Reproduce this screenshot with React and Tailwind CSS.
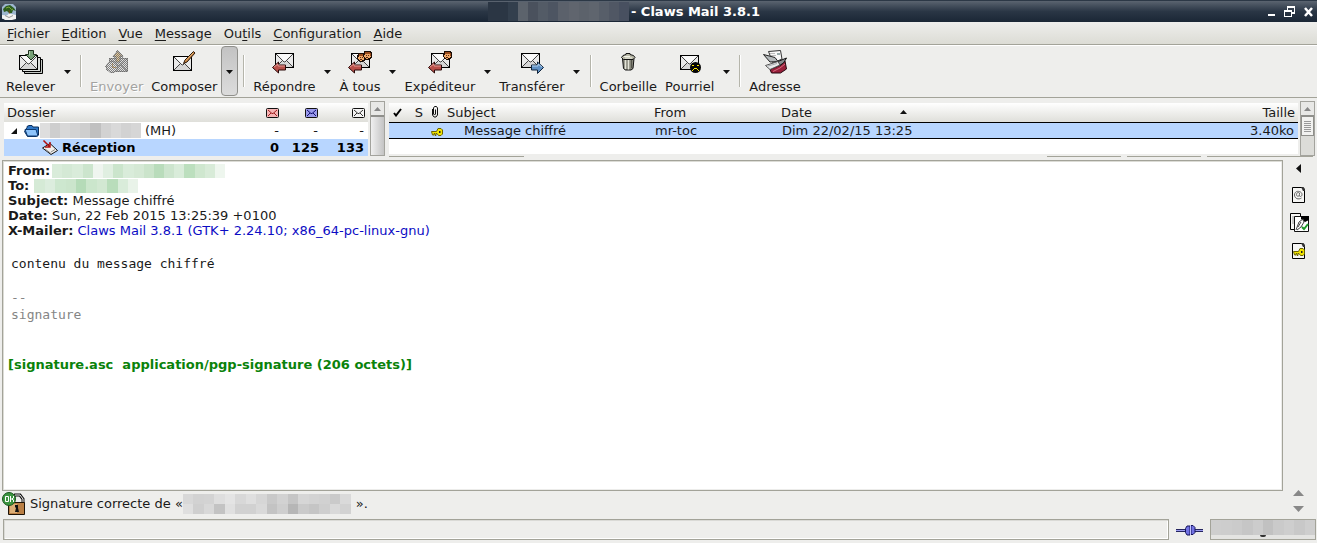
import { useState } from 'react';

const MENUS = [
  ['', 'F', 'ichier'],
  ['', 'E', 'dition'],
  ['', 'V', 'ue'],
  ['', 'M', 'essage'],
  ['Ou', 't', 'ils'],
  ['', 'C', 'onfiguration'],
  ['', 'A', 'ide'],
];

const TITLE_BLUR = ['#2b3644', '#2b3644', '#333f4d', '#5c636c', '#4a515d', '#535b66', '#4d5562', '#5b616b', '#60656e', '#5c626b', '#5f656e', '#575e69', '#505764', '#485060'];
const FOLDER_BLUR = ['#dedede', '#cecece', '#d8d8d8', '#d3d3d3', '#cecece', '#c0c0c0', '#d2d2d2', '#d9d9d9', '#d2d2d2', '#d6d6d6'];
const FROM_BLUR = ['#d9ecda', '#d4e9d5', '#d9ecda', '#cce5cd', '#eff5ef', '#e0efe1', '#cbe5cc', '#d9ecda', '#d5e9d5', '#cbe4cb', '#b9dcbb', '#cde5ce', '#d9ecda', '#bcdfbe', '#cfe7cf', '#d8ebd8', '#eef6ee'];
const TO_BLUR = ['#d5ead6', '#dcedde', '#cde7cf', '#cbe5cc', '#b5dbb8', '#cbe6cc', '#d2e8d2', '#b9ddbb', '#d9ecda', '#e9f3e9'];
const SIGNER_BLUR_TOP = ['#d8d8d8', '#d2d2d2', '#d3d3d3', '#dedede', '#e4e4e4', '#d8d8d8', '#dfdfdf', '#d6d6d6', '#c9c9c9', '#d2d2d2', '#c5c5c5', '#d6d6d6', '#d3d3d3', '#d1d1d1', '#cacaca', '#dadada'];
const SIGNER_BLUR_BOTTOM = ['#dfdfdf', '#cfcfcf', '#d8d8d8', '#c3c3c3', '#e0e0e0', '#d1d1d1', '#d1d1d1', '#d9d9d9', '#c3c3c3', '#cecece', '#b6b6b6', '#cacaca', '#c5c5c5', '#cecece', '#d9d9d9', '#d2d2d2'];
const ACCOUNT_BLUR = ['#cecece', '#cdcdcd', '#cbcbcb', '#c6c6c6', '#cccccc', '#c1c1c1', '#cacaca', '#cecece', '#c8c8c8', '#cecece'];

function Mosaic({ colors, className }) {
  return (
    <span className={`flex ${className}`} aria-hidden="true">
      {colors.map((c, i) => <span key={i} className="flex-1" style={{ backgroundColor: c }} />)}
    </span>
  );
}

/* Shared icon pieces */
function Envelope({ x = 0, y = 0 }) {
  return (
    <g transform={`translate(${x} ${y})`}>
      <rect x="0.5" y="0.5" width="18" height="14" fill="#e9e9e9" stroke="#000" />
      <path d="M1 14 7 8l2 2h1l2-2 6 6z" fill="#d6d6d6" />
      <path d="M2 1h15L9.500 8.500z" fill="#fafafa" />
      <path d="M1 1l8 8h1l8-8M1 14l6-6M18 14l-6-6" fill="none" stroke="#444" />
    </g>
  );
}

function RedArrow() {
  return (
    <>
      <path d="M.5 17.500 6.500 12v3h7v5h-7v3z" fill="#b84f49" stroke="#2a0808" />
      <path d="M2 17l4-3v2h7" fill="none" stroke="#e59a94" />
    </>
  );
}

function Head({ x, y }) {
  return (
    <g transform={`translate(${x} ${y})`} shapeRendering="crispEdges">
      <path d="M1 0h7v1h1v6H8v1H6v1H3V8H1V6H0V2h1z" fill="#1c0e08" />
      <path d="M2 3h6v3H7v1H5v1H3V7H2V6H1V4h1z" fill="#f0a868" />
      <path d="M2 1h5v1h1v3H7V3H2z" fill="#9a4c1c" />
      <path d="M3 4h1v1H3zM5 4h1v1H5zM3 6h2v1H3z" fill="#5a2a10" />
    </g>
  );
}

function Icon({ name }) {
  return (
    <svg className="block" width="24" height="24" viewBox="0 0 24 24" aria-hidden="true">
      {name === 'receive' && (
        <>
          <path d="M5.500 9.500h18v14h-18z" fill="#c4c8c4" stroke="#000" />
          <path d="M3.500 7.500h18v14h-18z" fill="#dcdfdc" stroke="#000" />
          <Envelope x={0} y={5} />
          <path d="M9.500.5h5v4h3L12 10 6.500 4.500h3z" fill="#76a076" stroke="#1d301d" />
          <path d="M10.500 1v4.500" stroke="#b3d0b3" />
        </>
      )}
      {name === 'send' && (
        <>
          <defs>
            <pattern id="stipple" width="2" height="2" patternUnits="userSpaceOnUse">
              <path d="M0 0h1v1H0zM1 1h1v1H1z" fill="#555" />
            </pattern>
          </defs>
          <g opacity="0.8">
            <path d="M4.500 8.500h18v13h-18z" fill="#dcdcdc" stroke="#888" />
            <path d="M5 9l8 7h1l8-7M5 21l6-6M22 21l-6-6" fill="none" stroke="#888" />
            <path d="M12.500 1 18 6.500h-3V12h-4V6.500H8z" fill="#e5c38a" stroke="#888" />
            <circle cx="7" cy="17" r="5.500" fill="#e6e6e6" stroke="#888" />
            <path d="M7.500 13v4.500H11" fill="none" stroke="#c79b58" />
          </g>
          <path d="M4 8h4V6l4.500-6L18 6v2h5v14H12l-5 1-6-3-1-5 4-4z" fill="url(#stipple)" opacity="0.7" shapeRendering="crispEdges" />
        </>
      )}
      {name === 'compose' && (
        <>
          <Envelope x={1} y={6} />
          <path d="M21.500 1.500 13 10l-1.500 3.500L15 12l8-9z" fill="#c58443" stroke="#2b190b" />
          <path d="M21 3l-7 7.500" stroke="#e9b274" />
        </>
      )}
      {name === 'reply' && <><Envelope x={3} y={3} /><RedArrow /></>}
      {name === 'all' && <><Envelope x={3} y={3} /><Head x={9} y={3} /><Head x={15} y={1} /><RedArrow /></>}
      {name === 'sender' && <><Envelope x={3} y={3} /><Head x={15} y={1} /><RedArrow /></>}
      {name === 'forward' && (
        <>
          <Envelope x={1} y={3} />
          <path d="M23.500 17.500 17.500 12v3h-6v5h6v3.500z" fill="#5f90c4" stroke="#10243c" />
          <path d="M12 16h6v-2l4 3" fill="none" stroke="#b4d2ee" />
        </>
      )}
      {name === 'trash' && (
        <>
          <path d="M6.500 8.500h11.500l-1 10-2 1.500H9.500l-2-1.500z" fill="#86867a" stroke="#111" />
          <path d="M9.500 10v9M12.500 10v9.500" stroke="#e4e4d8" strokeWidth="1.500" />
          <path d="M15.500 10v8" stroke="#55554c" />
          <path d="M5.500 7.500 7 5.500l3-1V3.500h4v1l3.500 1 1.500 2-2 2H7.500z" fill="#b7b7a6" stroke="#111" />
          <path d="M8 6.500h6M9 8h7" stroke="#f2f2e6" />
        </>
      )}
      {name === 'spam' && (
        <>
          <Envelope x={2} y={5} />
          <circle cx="17.500" cy="17.500" r="5.500" fill="#050505" />
          <path d="M14 15h2v1h-2zM19 15h2v1h-2zM16 18h3v1h-3zM15 19h1v1h-1zM19 19h1v1h-1zM14 20h1v1h-1zM20 20h1v1h-1z" fill="#ffe600" shapeRendering="crispEdges" />
        </>
      )}
      {name === 'address' && (
        <>
          <path d="M7 19.500 18 15l4-4 1.500 8-6 4H8.500z" fill="#98203a" stroke="#240910" />
          <path d="M10 21.500l7-3.500 5-4" fill="none" stroke="#d86a80" />
          <path d="M5.500 1.500 17.500.500 19 9l-9 4z" fill="#f8f8f8" stroke="#333" />
          <path d="M7 3.500h5M8 5.500h5" stroke="#bbb" />
          <path d="M14 3h3v2h-3z" fill="#9aa" />
          <path d="M.5 4.500 12 7.500l3 4-8 .5z" fill="#b4b9bb" stroke="#222" />
          <path d="M15 11.500 23.500 8l-3 5-4 2.500z" fill="#888d90" stroke="#111" />
          <path d="M2.500 15.500 15 11.500l2 3.500-10 4.500z" fill="#e9ebec" stroke="#555" />
          <path d="M5 16l9-2.500" stroke="#a9adaf" />
        </>
      )}
    </svg>
  );
}

function ToolButton({ icon, label, disabled }) {
  return (
    <button
      disabled={disabled}
      className="flex flex-col items-center gap-[5px] px-1 pt-[5px] text-[#1a1a1a] disabled:text-[#a3a3a1] disabled:[text-shadow:1px_1px_0_#fff]"
    >
      <Icon name={icon} />
      <span>{label}</span>
    </button>
  );
}

function DropArrow({ label, boxed }) {
  return (
    <button
      aria-label={label}
      className={`flex items-center justify-center pt-0.5 ${boxed ? 'my-px w-[17px] rounded-sm border border-[#8f8f8b] bg-linear-to-b from-[#c3c3c3] to-[#dcdcdc]' : 'w-4'}`}
    >
      <svg width="7" height="4" viewBox="0 0 7 4"><path d="M0 0h7L3.500 4z" fill="#111" /></svg>
    </button>
  );
}

function Separator() {
  return <div className="my-[10px] mr-1 ml-[5px] box-content w-px self-stretch border-r border-white bg-[#b5b5ab]" />;
}

function Toolbar() {
  return (
    <div className="flex h-[53px] border-b border-[#a3a399] bg-[#eeeeec] pl-0.5 shadow-[inset_0_1px_#fff]">
      <ToolButton icon="receive" label="Relever" />
      <DropArrow label="Options de relève" />
      <Separator />
      <ToolButton icon="send" label="Envoyer" disabled />
      <ToolButton icon="compose" label="Composer" />
      <DropArrow label="Options de composition" boxed />
      <Separator />
      <ToolButton icon="reply" label="Répondre" />
      <DropArrow label="Options de réponse" />
      <ToolButton icon="all" label="À tous" />
      <DropArrow label="Options de réponse à tous" />
      <ToolButton icon="sender" label="Expéditeur" />
      <DropArrow label="Options de réponse à l'expéditeur" />
      <ToolButton icon="forward" label="Transférer" />
      <DropArrow label="Options de transfert" />
      <Separator />
      <ToolButton icon="trash" label="Corbeille" />
      <ToolButton icon="spam" label="Pourriel" />
      <DropArrow label="Options de pourriel" />
      <Separator />
      <ToolButton icon="address" label="Adresse" />
    </div>
  );
}

function MiniMail({ fill, stroke, label }) {
  return (
    <svg className="ml-auto block" width="13" height="10" viewBox="0 0 13 10" role="img" aria-label={label}>
      <rect x="0.5" y="0.5" width="12" height="9" rx="1" fill={fill} stroke="#111" />
      <path d="M2 2l4 3.500h1L11 2M2 8l3-3M11 8 8 5" fill="none" stroke={stroke} />
    </svg>
  );
}

function KeyShape() {
  return (
    <>
      <path d="M.5 3.500h5l1.500-3h3L11.500 2v4L10 7.500H7.500L6 5.500H5v2H4v-2H3v1.500H1.500z" fill="#f2e400" stroke="#6b6400" />
      <path d="M8 3h1.500v2H8z" fill="#222" />
    </>
  );
}

function ScrollBar({ grip }) {
  return (
    <div className="flex w-[15px] flex-col border border-[#a3a39d] bg-[#dcdcd8]" aria-hidden="true">
      <div className="flex h-[14px] shrink-0 items-center justify-center border-b border-[#8f8f8b] bg-[#e8e8e6]">
        <svg width="7" height="4" viewBox="0 0 7 4"><path d="M0 4h7L3.500 0z" fill="#888" /></svg>
      </div>
      {grip ? (
        <div className="flex h-5 flex-col items-center justify-center gap-px border border-[#8f8f8b] bg-[#f2f2f0]">
          {[0, 1, 2, 3, 4, 5].map((n) => <span key={n} className="h-px w-[7px] bg-[#999]" />)}
        </div>
      ) : (
        <div className="flex-1 border-t border-[#8f8f8b] bg-linear-to-r from-[#f0f0f0] to-[#c4c4c4]" />
      )}
    </div>
  );
}

function FolderPane() {
  return (
    <div className="flex w-[381px] gap-[2px]">
      <div className="mt-0.5 flex-1">
        <table className="w-full table-fixed">
          <colgroup>
            <col />
            <col className="w-[39px]" />
            <col className="w-[39px]" />
            <col className="w-[46px]" />
          </colgroup>
          <thead>
            <tr className="h-[19px] bg-linear-to-b from-white to-[#dfdfda]">
              <th className="pl-[3px] text-left font-normal">Dossier</th>
              <th className="pr-1"><MiniMail fill="#f6b4b4" stroke="#a02020" label="Nouveaux" /></th>
              <th className="pr-1"><MiniMail fill="#9a9aea" stroke="#101070" label="Non lus" /></th>
              <th className="pr-[3px]"><MiniMail fill="#f4f4f4" stroke="#333" label="Total" /></th>
            </tr>
          </thead>
          <tbody>
            <tr className="h-[17px] bg-white">
              <td>
                <div className="flex items-center">
                  <svg className="ml-[7px]" width="6" height="6" viewBox="0 0 6 6"><path d="M6 0v6H0z" fill="#111" /></svg>
                  <svg className="ml-[7px]" width="16" height="12" viewBox="0 0 16 12">
                    <path d="M.5 6.500 3 2.500V1.500L5 .5h3l1 1.500h5.500V10L12 11.500H3.500z" fill="#2f78c8" stroke="#0a2e5c" />
                    <path d="M1 4.500h11l2 6.500H3.500z" fill="#8ec4fb" stroke="#0e3b73" />
                  </svg>
                  <Mosaic colors={FOLDER_BLUR} className="h-[15px] w-[101px]" />
                  <span className="ml-1">(MH)</span>
                </div>
              </td>
              <td className="pr-1 text-right">-</td>
              <td className="pr-1 text-right">-</td>
              <td className="pr-1 text-right">-</td>
            </tr>
            <tr className="h-[17px] bg-[#b8d6ff] font-bold text-black">
              <td>
                <div className="flex items-center pl-[38px]">
                  <svg width="16" height="15" viewBox="0 0 16 15">
                    <path d="M.5 8 8 3.500l7.500 7L9 14.500z" fill="#f2efec" stroke="#111" />
                    <path d="M3 9l6 4.500M9 12l4-2.500" stroke="#888" />
                    <path d="M1.500.5l6 6M8 2v5H3" fill="none" stroke="#b01010" strokeWidth="1.500" />
                  </svg>
                  <span className="ml-1">Réception</span>
                </div>
              </td>
              <td className="pr-1 text-right">0</td>
              <td className="pr-[3px] text-right">125</td>
              <td className="pr-1 text-right">133</td>
            </tr>
          </tbody>
        </table>
      </div>
      <ScrollBar />
    </div>
  );
}

function MessageList() {
  return (
    <div className="flex flex-1 gap-[2px]">
      <div className="mt-0.5 mb-0.5 flex-1 bg-white">
        <table className="w-full table-fixed border-collapse">
          <colgroup>
            <col className="w-[19px]" />
            <col className="w-[18px]" />
            <col className="w-[17px]" />
            <col className="w-[207px]" />
            <col className="w-[127px]" />
            <col className="w-[134px]" />
            <col />
          </colgroup>
          <thead>
            <tr className="h-[19px] bg-linear-to-b from-white to-[#dfdfda]">
              <th className="pl-1">
                <svg width="9" height="9" viewBox="0 0 9 9" role="img" aria-label="Marqué"><path d="M1 5l2 2.500L8 1" fill="none" stroke="#000" strokeWidth="2" /></svg>
              </th>
              <th className="pl-1 text-center font-normal">S</th>
              <th className="pl-[5px]">
                <svg className="block" width="8" height="12" viewBox="0 0 8 12" role="img" aria-label="Pièce jointe"><path d="M1.500 3v6L3 11h2l1.500-2V2L5.500.5h-2L2.500 2v6l1 1 1-1V3.500" fill="none" stroke="#111" /></svg>
              </th>
              <th className="pl-1 text-left font-normal">Subject</th>
              <th className="pl-1 text-left font-normal">From</th>
              <th className="px-1 font-normal">
                <div className="flex items-center justify-between">
                  Date
                  <svg width="7" height="4" viewBox="0 0 7 4"><path d="M0 4h7L3.500 0z" fill="#111" /></svg>
                </div>
              </th>
              <th className="pr-[3px] text-right font-normal">Taille</th>
            </tr>
          </thead>
          <tbody>
            <tr className="h-4 border-y border-black bg-[#b8d6ff]">
              <td />
              <td />
              <td className="pt-1 pl-[5px] align-middle">
                <svg className="block" width="12" height="9" viewBox="0 0 12 9"><KeyShape /></svg>
              </td>
              <td className="pl-[21px]">Message chiffré</td>
              <td className="pl-[5px]">mr-toc</td>
              <td className="pl-[5px] whitespace-nowrap">Dim 22/02/15 13:25</td>
              <td className="pr-1 text-right">3.40ko</td>
            </tr>
          </tbody>
        </table>
      </div>
      <ScrollBar grip />
    </div>
  );
}

function MimeButton({ type, label }) {
  return (
    <button aria-label={label} className="flex h-7 items-center justify-center">
      <svg width="20" height="20" viewBox="0 0 20 20">
        {type !== 'signed' && (
          <>
            <path d="M3.500 2.500h10l2 2v13h-12z" fill="#f6f6f4" stroke="#000" />
            <path d="M12 2h2.500L16 4v2h-2z" fill="#333" />
          </>
        )}
        {type === 'mail' && (
          <path d="M12.500 13c-3 2-7 .5-7-3s3.500-4.500 6-3 1.500 4.500 0 4.500-1-1-1-3.500c-1-1-3-.5-3 1.500s2 2.500 3 .5" fill="none" stroke="#666" />
        )}
        {type === 'key' && <g transform="translate(4 7)"><KeyShape /></g>}
        {type === 'signed' && (
          <>
            <path d="M1.500.5h10v16h-10z" fill="#f6f6f4" stroke="#000" />
            <path d="M3 4h2M3 6h2M3 8h2M3 10h2" stroke="#999" />
            <path d="M5.500 3.500h14v15h-14z" fill="#fff" stroke="#111" />
            <path d="M12 3h8v4l-4 2-4-3z" fill="#000" />
            <path d="M7 17l3-8 4-3 1 3-3 5-4 3M9 14l3-5" fill="none" stroke="#444" />
            <path d="M13 14l2 2 4-5" fill="none" stroke="#1d9a28" strokeWidth="2" />
          </>
        )}
      </svg>
    </button>
  );
}

function SideBar() {
  return (
    <div className="flex w-[34px] flex-col pt-1 pr-[3px]">
      <button aria-label="Masquer les pièces" className="flex h-[9px] items-center justify-center">
        <svg width="5" height="9" viewBox="0 0 5 9"><path d="M5 0v9L0 4.500z" fill="#111" /></svg>
      </button>
      <div className="mt-2 flex flex-col">
        <MimeButton type="mail" label="Message" />
        <MimeButton type="signed" label="Partie signée" />
        <MimeButton type="key" label="Signature" />
      </div>
      <div className="mt-auto flex flex-col items-center gap-2.5 pb-1">
        <button aria-label="Partie précédente">
          <svg className="block" width="11" height="6" viewBox="0 0 11 6"><path d="M0 6h11L5.500 0z" fill="#888" /></svg>
        </button>
        <button aria-label="Partie suivante">
          <svg className="block" width="11" height="6" viewBox="0 0 11 6"><path d="M0 0h11L5.500 6z" fill="#888" /></svg>
        </button>
      </div>
    </div>
  );
}

function MessageView() {
  return (
    <article className="flex-1 border border-[#a3a399] bg-white px-1 py-0.5 shadow-[inset_1px_1px_#dcdcd6,inset_-1px_-1px_#ececea]">
      <div className="px-px">
        <div className="flex h-[15px] items-center gap-[2px]">
          <b>From:</b>
          <Mosaic colors={FROM_BLUR} className="h-[14px] w-[173px]" />
        </div>
        <div className="flex h-[15px] items-center gap-[5px]">
          <b>To:</b>
          <Mosaic colors={TO_BLUR} className="h-[14px] w-[104px]" />
        </div>
        <div><b>Subject:</b> Message chiffré</div>
        <div><b>Date:</b> Sun, 22 Feb 2015 13:25:39 +0100</div>
        <div><b>X-Mailer:</b> <a href="#mailer" className="text-[#0c0cc4]">Claws Mail 3.8.1 (GTK+ 2.24.10; x86_64-pc-linux-gnu)</a></div>
      </div>
      <pre className="mt-[17px] pl-1 font-['DejaVu_Sans_Mono',monospace] leading-[17px]">
        {'contenu du message chiffré\n\n'}
        <span className="text-[#858585]">{'--\nsignature'}</span>
      </pre>
      <a href="#signature" className="mt-[34px] block px-px font-bold whitespace-pre text-[#0a820a]">
        {'[signature.asc  application/pgp-signature (206 octets)]'}
      </a>
    </article>
  );
}

function StatusBar() {
  return (
    <footer className="flex items-center pt-[3px] pr-px pb-[3px] pl-[3px]">
      <div className="h-[21px] flex-1 border border-[#a3a399] bg-[#eeeeec] shadow-[inset_1px_1px_#dadad6,inset_-1px_-1px_#fff]" role="status" />
      <button aria-label="En ligne" className="mx-[7px]">
        <svg className="block" width="27" height="12" viewBox="0 0 27 12">
          <path d="M0 5h27v3H0z" fill="#252560" />
          <path d="M0 6.500h27" stroke="#9c9cf0" />
          <path d="M9.500 4.500 11 2h3v9h-3L9.500 8.500zM15 1.500h2l2 2v5l-2 2h-2z" fill="#7272e4" stroke="#14145a" />
          <path d="M14.500 1v10" stroke="#c4c4ff" />
        </svg>
      </button>
      <button aria-label="Compte" className="flex h-[21px] w-[106px] flex-col overflow-hidden border border-[#a3a399] bg-[#e4e4e2]">
        <Mosaic colors={ACCOUNT_BLUR} className="h-[15px] w-full" />
        <span className="mx-auto h-0.5 w-1.5 rounded-b bg-[#333]" />
      </button>
    </footer>
  );
}

export default function App() {
  const [openMenu, setOpenMenu] = useState(null);

  return (
    <div className="flex min-h-screen flex-col bg-[#eeeeec] font-['DejaVu_Sans',sans-serif] text-[13px] leading-[15px] text-[#1a1a1a]">
      {/* Title bar */}
      <header className="flex h-[22px] items-center border-t border-[#2c3846] bg-linear-to-b from-[#5b6470] via-[#2a3645] to-[#1a2635] px-0.5 text-white">
        <svg width="14" height="16" viewBox="0 0 14 16" aria-hidden="true">
          <path d="M0 3 3 0h8l3 3v12H0z" fill="#9db6cf" />
          <path d="M1 5 4 2l4-1 4 3 2 3-3-1-1 3H7L5 7 2 8z" fill="#2c5d1e" />
          <path d="M4 4l3-1 2 2M9 6l2-1" stroke="#7da83a" fill="none" />
          <path d="M7 6l1 5" stroke="#6b4a20" />
          <path d="M0 11l5 .5 2-2 7 1.500v4l-4 1H3l-3-2z" fill="#f2f2f2" />
          <path d="M3 11.500l4 2 4-2" fill="none" stroke="#999" />
        </svg>
        <div className="flex flex-1 items-center justify-center gap-0.5 pr-9">
          <Mosaic colors={TITLE_BLUR} className="h-[19px] w-[141px]" />
          <h1 className="font-bold">- Claws Mail 3.8.1</h1>
        </div>
        <div className="flex items-center gap-[9px] pr-0.5">
          <button aria-label="Réduire">
            <svg className="block" width="7" height="10" viewBox="0 0 7 10"><path d="M0 7h7v2H0z" fill="#fff" /></svg>
          </button>
          <button aria-label="Restaurer">
            <svg className="block" width="11" height="11" viewBox="0 0 11 11">
              <path d="M3 0h8v8H8V6h2V2H4v2H3zM0 4h8v7H0zM1 6v4h6V6z" fill="#fff" fillRule="evenodd" />
            </svg>
          </button>
          <button aria-label="Fermer">
            <svg className="block" width="9" height="10" viewBox="0 0 9 10"><path d="M1 1l7 8M8 1 1 9" stroke="#fff" strokeWidth="2.500" /></svg>
          </button>
        </div>
      </header>

      {/* Menu bar */}
      <nav className="flex h-[23px] items-center gap-3 border-b border-[#a3a399] bg-linear-to-b from-[#eeeeec] to-[#dcdcd5] pl-[7px]">
        {MENUS.map(([before, key, after], i) => (
          <button key={key} aria-expanded={openMenu === i} onClick={() => setOpenMenu(openMenu === i ? null : i)}>
            {before}<u className="underline-offset-2">{key}</u>{after}
          </button>
        ))}
      </nav>

      <Toolbar />

      {/* Folders and messages */}
      <section className="flex h-[58px] items-stretch gap-1 px-1 pt-[3px] pr-0.5">
        <FolderPane />
        <MessageList />
      </section>
      <div className="flex h-1 items-start gap-[6px] pr-1 pl-[389px]" aria-hidden="true">
        <span className="mr-auto h-px w-[135px] bg-[#a3a399]" />
        <span className="h-px w-[74px] bg-[#a3a399]" />
        <span className="h-px w-[74px] bg-[#a3a399]" />
        <span className="h-px w-[106px] bg-[#a3a399]" />
      </div>

      {/* Message */}
      <main className="flex flex-1">
        <div className="flex min-w-0 flex-1 flex-col pl-0.5">
          <MessageView />
          <div className="flex h-[25px] items-center">
            <svg width="24" height="24" viewBox="0 0 24 24" aria-hidden="true">
              <path d="M10 12V7l3-4h5l3 4v5" fill="none" stroke="#111" strokeWidth="3" />
              <path d="M10 12V7l3-4h5l3 4v5" fill="none" stroke="#eee" />
              <path d="M6.500 10.500h16v12h-16z" fill="#b97f45" stroke="#1d1206" />
              <path d="M8 12h7v9H8z" fill="#dcae76" />
              <path d="M13 13h3v3l1 4h-4l1-4-1-1z" fill="#111" />
              <circle cx="7" cy="7" r="6.500" fill="#3c9440" stroke="#17551b" />
              <path d="M3.500 4.500h3v5h-3zM8.500 4v6M11.500 4v2l-2 1 2 1v2" fill="none" stroke="#fff" />
            </svg>
            <span className="ml-1 whitespace-nowrap">Signature correcte de «</span>
            <div className="flex h-5 w-[168px] flex-col">
              <Mosaic colors={SIGNER_BLUR_TOP} className="flex-1" />
              <Mosaic colors={SIGNER_BLUR_BOTTOM} className="flex-1" />
            </div>
            <span className="ml-[5px]">».</span>
          </div>
        </div>
        <SideBar />
      </main>

      <StatusBar />
    </div>
  );
}
